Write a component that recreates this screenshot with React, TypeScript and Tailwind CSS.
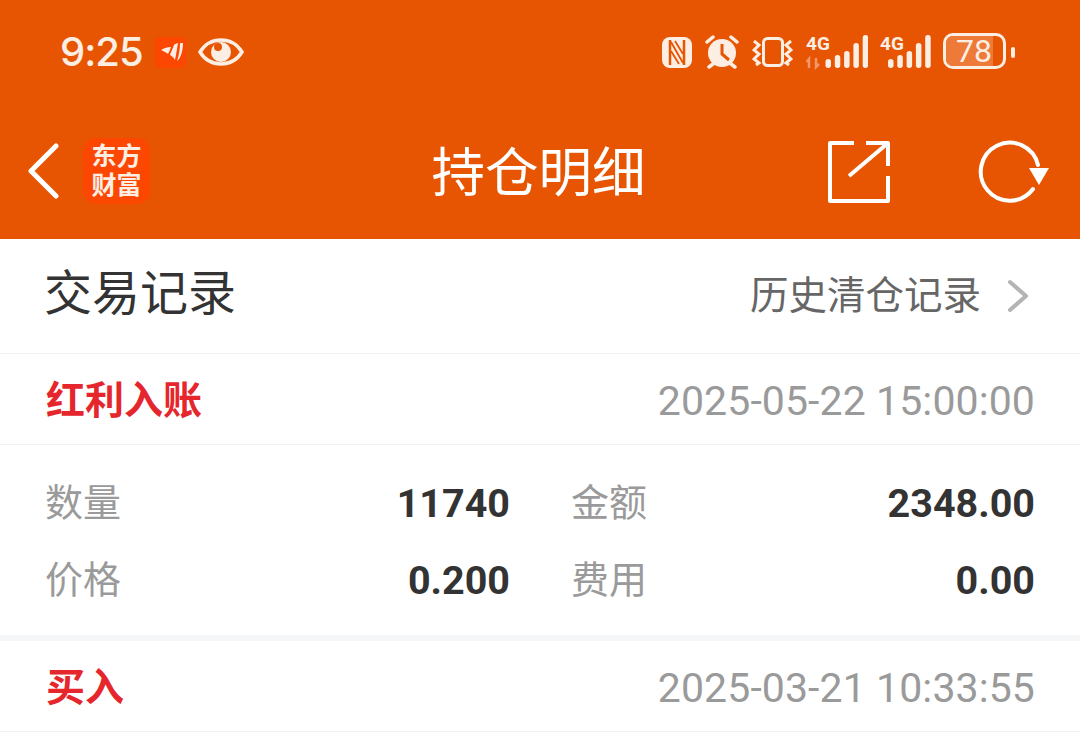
const CJK = "font-['Roboto','Noto_Sans_CJK_SC',sans-serif]";

function StatusLeft() {
  return (
    <div className="flex h-[40px] items-center">
      <span className="w-[82px] text-[40px] leading-none font-medium text-[#fdeee3] font-['Inter','Noto_Sans',sans-serif] tracking-[-1px]">9:25</span>
      <div className="ml-[13px] flex h-[31px] w-[31px] items-center justify-center rounded-[5px] bg-[#fc4702]">
        <svg width="31" height="31" viewBox="0 0 31 31" fill="#fdeee3">
          <path d="M6 13c3-2 7-3 10-3-1 3-2 5-3 7-2-2-5-3-7-4z" />
          <path d="M15 18c1-3 3-7 4-10 1-1 3-2 4-2-1 6-2 12-3 17-1-2-3-4-5-5z" />
          <path d="M22 24c2-6 3-12 3-18l3 0c0 7-2 15-6 18z" />
        </svg>
      </div>
      <svg className="ml-[12px]" width="46" height="28" viewBox="0 0 46 28">
        <path d="M2 14C7 6 14 2 23 2s16 4 21 12C39 22 32 26 23 26S7 22 2 14z" fill="none" stroke="#fdeee3" strokeWidth="3.500" />
        <circle cx="23" cy="14" r="10" fill="#fdeee3" />
        <circle cx="20" cy="9" r="4" fill="#e75502" />
      </svg>
    </div>
  );
}

function Bars({ x }: { x: number }) {
  const hs = [9, 13, 17, 25, 33];
  return (
    <>
      {hs.map((h, i) => (
        <rect key={i} x={x + i * 9.300} y={36 - h} width="5.500" height={h} rx="2.700" fill="#fdeee3" />
      ))}
    </>
  );
}

function StatusRight() {
  return (
    <div className="flex h-[40px] items-center">
      <svg width="30" height="31" viewBox="0 0 30 31">
        <rect width="30" height="31" rx="8" fill="#fdeee3" />
        <path d="M8 3v25M22 3v25" stroke="#e75502" strokeWidth="2.500" />
        <path d="M9 5l12 21M13 4l8 13M9 14l8 13" stroke="#e75502" strokeWidth="1.800" />
      </svg>
      <svg className="ml-[13px]" width="34" height="34" viewBox="0 0 34 34">
        <circle cx="17" cy="18" r="14" fill="#fdeee3" />
        <path d="M17 9v10l7 6" fill="none" stroke="#e75502" strokeWidth="3" />
        <path d="M2 7l6-5M32 7l-6-5M4 32l4-3M30 32l-4-3" stroke="#fdeee3" strokeWidth="3.500" strokeLinecap="round" />
      </svg>
      <svg className="ml-[13px]" width="41" height="30" viewBox="0 0 41 30" fill="none" stroke="#fdeee3">
        <rect x="11.500" y="1.500" width="19" height="27" rx="4" strokeWidth="3" />
        <path d="M2 4l5 4-5 5 5 4-5 5 5 4-3 2M39 4l-5 4 5 5-5 4 5 5-5 4 3 2" strokeWidth="3" />
      </svg>
      <svg className="ml-[13px]" width="62" height="40" viewBox="0 0 62 40">
        <text x="0" y="18" fontSize="19" fontWeight="700" fill="#fdeee3" fontFamily="Roboto, sans-serif">4G</text>
        <path d="M3 36v-9l-2.500 3M10 26v9l3-3" stroke="#f3976a" strokeWidth="2.500" fill="none" />
        <Bars x={19.500} />
      </svg>
      <svg className="ml-[12px]" width="51" height="40" viewBox="0 0 51 40">
        <text x="0" y="18" fontSize="19" fontWeight="700" fill="#fdeee3" fontFamily="Roboto, sans-serif">4G</text>
        <Bars x={8} />
      </svg>
      <div className="relative mb-[2px] ml-[12px] flex h-[36px] w-[63px] items-center rounded-[10px] border-[3px] border-[#fdeee3]">
        <div className="h-full w-[47px] rounded-l-[7px] bg-[#ee7a3a]" />
        <span className="absolute left-[10px] top-0 text-[32px] leading-[30px] text-[#fdeee3] font-['Roboto',sans-serif]">78</span>
      </div>
      <div className="ml-[5px] h-[11px] w-[4px] rounded-[2px] bg-[#fdeee3]" />
    </div>
  );
}

function Row({ l1, v1, l2, v2 }: { l1: string; v1: string; l2: string; v2: string }) {
  return (
    <div className="flex h-[77px] items-center pl-[45px] pr-[45px]">
      <div className="flex w-[465px] items-center justify-between">
        <span className="mb-[2px] text-[38px] leading-none text-[#9a9a9a]">{l1}</span>
        <span className="text-[39.500px] leading-none font-bold text-[#333333]">{v1}</span>
      </div>
      <div className="ml-[61px] flex flex-1 items-center justify-between">
        <span className="mb-[2px] text-[38px] leading-none text-[#9a9a9a]">{l2}</span>
        <span className="text-[39.500px] leading-none font-bold text-[#333333]">{v2}</span>
      </div>
    </div>
  );
}

function RecordHead({ type, time }: { type: string; time: string }) {
  return (
    <div className="flex h-[91px] items-center justify-between border-b border-[#f3f3f3] pl-[46px] pr-[45px] pt-[4px]">
      <span className="text-[39px] leading-none font-bold text-[#e5262c]">{type}</span>
      <span className="text-[41px] leading-none tracking-[0.1px] text-[#9a9a9a]">{time}</span>
    </div>
  );
}

export default function App() {
  return (
    <div className={`h-[735px] w-[1080px] overflow-hidden bg-white ${CJK}`}>
      {/* status bar */}
      <div className="flex h-[110px] items-start justify-between bg-[#e75502] pl-[60px] pr-[65px] pt-[32px]">
        <StatusLeft />
        <StatusRight />
      </div>

      {/* title bar */}
      <div className="flex h-[129px] items-center justify-between bg-[#e75502] pb-[8px] pl-[27px] pr-[30px]">
        <div className="flex w-[260px] items-center">
          <svg width="33" height="56" viewBox="0 0 33 56" fill="none" stroke="white" strokeWidth="5" strokeLinecap="round" strokeLinejoin="round">
            <path d="M29 3L4 28l25 25" />
          </svg>
          <div className="ml-[23px] flex h-[66px] w-[67px] flex-col items-center justify-center rounded-[13px] bg-[#fc4702] text-[25px] font-bold leading-[29px] text-[#fdeee3]">
            <span>东方</span>
            <span>财富</span>
          </div>
        </div>
        <span className="mt-[6px] text-[53.500px] leading-none text-white">持仓明细</span>
        <div className="flex w-[260px] items-center justify-end">
          <svg width="64" height="64" viewBox="0 0 64 64" fill="none" stroke="white" strokeWidth="4" strokeLinejoin="round">
            <path d="M27 4H3v58h58V37" />
            <path d="M39 4h22v23" />
            <path d="M61 4L22 37" />
          </svg>
          <svg className="ml-[87px]" width="72" height="64" viewBox="0 0 72 64" fill="none">
            <path d="M60 26A29 29 0 1 0 55 50" stroke="white" strokeWidth="4" strokeLinecap="round" />
            <path d="M51 29h20L61 46z" fill="white" />
          </svg>
        </div>
      </div>

      {/* records header */}
      <div className="flex h-[115px] items-center justify-between border-b border-[#f3f3f3] pl-[44px] pr-[51px]">
        <span className="mb-[4px] text-[48px] leading-none text-[#333333]">交易记录</span>
        <div className="flex items-center">
          <span className="text-[38.500px] leading-none text-[#666666]">历史清仓记录</span>
          <svg className="ml-[26px]" width="22" height="34" viewBox="0 0 22 34" fill="none" stroke="#b4b4b4" strokeWidth="4" strokeLinecap="round" strokeLinejoin="round">
            <path d="M3 3l16 14L3 31" />
          </svg>
        </div>
      </div>

      <RecordHead type="红利入账" time="2025-05-22 15:00:00" />
      <div className="flex h-[196px] flex-col justify-center border-b-[6px] border-[#f5f6f8] pt-[4px]">
        <Row l1="数量" v1="11740" l2="金额" v2="2348.00" />
        <Row l1="价格" v1="0.200" l2="费用" v2="0.00" />
      </div>

      <RecordHead type="买入" time="2025-03-21 10:33:55" />
    </div>
  );
}
